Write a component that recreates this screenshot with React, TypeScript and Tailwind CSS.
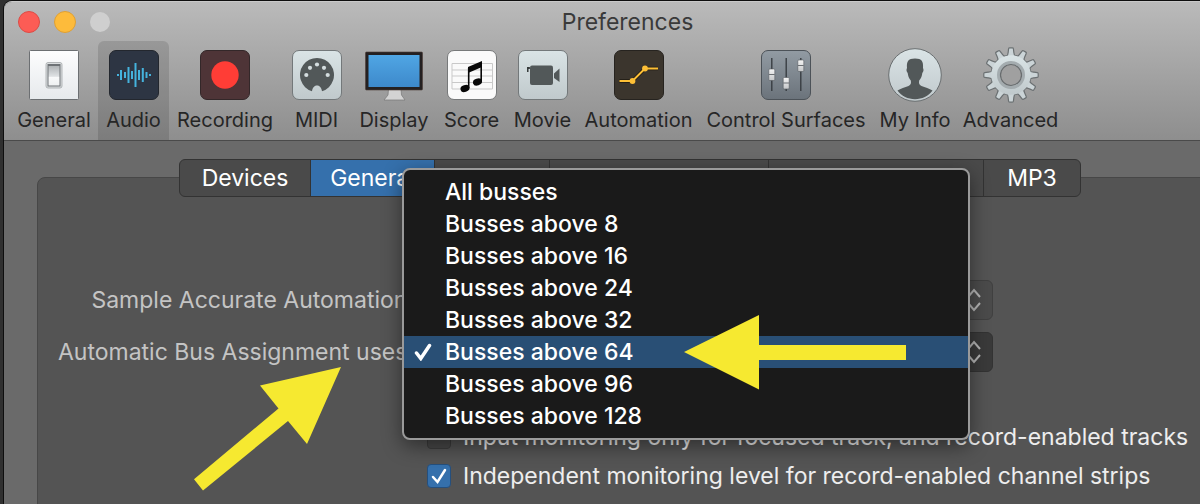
import { type ReactNode } from "react";

const Tile = ({ fill, stroke, children }: { fill: string; stroke: string; children: ReactNode }) => (
  <svg viewBox="0 0 50 50" className="h-[50px] w-[50px]">
    <rect x="0.5" y="0.5" width="49" height="49" rx="6.5" fill={fill} stroke={stroke} />
    {children}
  </svg>
);

const GeneralIcon = () => (
  <svg viewBox="0 0 50 50" className="h-[50px] w-[50px]">
    <rect x="0.5" y="0.5" width="49" height="49" rx="1" fill="url(#plate)" stroke="#6c6f72" />
    <rect x="17" y="12.5" width="16" height="25.5" rx="2" fill="#d9dcde" stroke="#a3a7aa" strokeWidth="0.8" />
    <rect x="19" y="14.5" width="12" height="21.5" fill="url(#rocker)" stroke="#6e7276" />
    <path d="M19 15.500H31" stroke="#6e7276" />
  </svg>
);

const WAVE = [
  [9, 1], [12, 5], [16, 3], [19.5, 8], [23, 4], [26.5, 12], [30, 5], [33.8, 7], [37.5, 3], [41, 1],
];

const AudioIcon = () => (
  <Tile fill="#2d3543" stroke="#23272e">
    {WAVE.map(([x, h]) => (
      <path key={x} d={`M${x} ${25 - h}V${25 + h}`} stroke="#45b3dd" strokeWidth="2" />
    ))}
  </Tile>
);

const RecordingIcon = () => (
  <Tile fill="#4e3437" stroke="#332729">
    <circle cx="25" cy="25" r="13.7" fill="#ff3d36" />
  </Tile>
);

const MidiIcon = () => (
  <Tile fill="url(#silver)" stroke="#73787a">
    <path
      d="M20 41.2A17 17 0 1 1 30 41.2C29.5 38 28 35.5 25 35.5S20.5 38 20 41.2Z"
      fill="#525859"
    />
    {[[14.3, 25], [18, 17.8], [25, 14.5], [32, 17.8], [35.7, 25]].map(([cx, cy]) => (
      <circle key={cx} cx={cx} cy={cy} r="2.1" fill="#d4dddf" />
    ))}
  </Tile>
);

const DisplayIcon = () => (
  <svg viewBox="0 0 58 52" className="h-[52px] w-[58px]">
    <path d="M23.500 40H36L36.500 46 40 51H19L23 46Z" fill="#d3d3d3" stroke="#777" strokeWidth="0.7" />
    <rect x="0.500" y="3" width="57" height="38" rx="1" fill="#242021" stroke="#4d3c38" strokeWidth="0.6" />
    <rect x="3.500" y="6" width="51" height="32" fill="url(#screen)" />
  </svg>
);

const ScoreIcon = () => (
  <Tile fill="#fafafa" stroke="#77797a">
    <path d="M5 13.500H45.500V39H5ZM5 20H45.500M5 26H45.500M5 32.500H45.500" fill="none" stroke="#c9c9c9" />
    <path d="M21 17 35 11V17L21 23Z" fill="#080808" />
    <path d="M21.700 18V38M34.200 12V32" stroke="#080808" strokeWidth="1.600" />
    <ellipse cx="18" cy="38.500" rx="4.600" ry="3.400" transform="rotate(-18 18 38.500)" fill="#080808" />
    <ellipse cx="30.500" cy="32" rx="4.600" ry="3.400" transform="rotate(-18 30.500 32)" fill="#080808" />
  </Tile>
);

const MovieIcon = () => (
  <Tile fill="url(#silver)" stroke="#73787a">
    <rect x="12" y="15.500" width="23" height="19.500" rx="2" fill="#525859" />
    <path d="M36 23.500 41.500 18.500V32L36 28Z" fill="#525859" />
    <path d="M9.800 17V22M9.800 18H12" stroke="#1f2222" strokeWidth="1.300" fill="none" />
  </Tile>
);

const AutomationIcon = () => (
  <Tile fill="#3b352d" stroke="#26231f">
    <path d="M5.500 31H18.500L31 18.500H44" fill="none" stroke="#1f1a12" strokeWidth="3.600" />
    <path d="M5.500 31H18.500L31 18.500H44" fill="none" stroke="#fdbf36" strokeWidth="2" />
    <circle cx="18.500" cy="31" r="2.900" fill="#fdbf36" />
    <circle cx="31" cy="18.500" r="2.900" fill="#fdbf36" />
  </Tile>
);

const ControlSurfacesIcon = () => (
  <Tile fill="url(#steel)" stroke="#4c5258">
    {[[10.8, 19], [25.2, 27.5], [39.8, 10]].map(([x, y]) => (
      <g key={x}>
        <path d={`M${x} 8V41`} stroke="#33383d" strokeWidth="1.300" />
        <rect x={x - 3} y={y} width="6" height="11.500" rx="1" fill="url(#knob)" stroke="#555a5f" strokeWidth="0.600" />
        <path d={`M${x - 3} ${y + 5.5}h6`} stroke="#6b6f73" />
      </g>
    ))}
  </Tile>
);

const MyInfoIcon = () => (
  <svg viewBox="0 0 54 54" className="h-[54px] w-[54px]">
    <circle cx="27" cy="27" r="26.300" fill="url(#silver)" stroke="#6a6f71" />
    <path
      d="M9.500 42.500C12.500 40.500 17 39.500 20.500 38 23 37 23.300 35 22.800 32.500 20.800 30.500 20 27.500 19.700 25 18.300 23.500 18.200 21.500 19 20 18.500 13.500 20 10.500 27 10.500S35.500 13.500 35 20C35.800 21.500 35.700 23.500 34.300 25 34 27.500 33.200 30.500 31.200 32.500 30.700 35 31 37 33.500 38 37 39.500 41.500 40.500 44.500 42.500 40.500 48 34 51.200 27 51.200S13.500 48 9.500 42.500Z"
      fill="#525859"
    />
  </svg>
);

const TEETH = Array.from({ length: 12 }, (_, i) => i * 30);

const AdvancedIcon = () => (
  <svg viewBox="0 0 56 56" className="h-14 w-14">
    <g stroke="#6b7072" strokeWidth="1.200" fill="#cbd4d7">
      <circle cx="28" cy="28" r="20" />
      {TEETH.map((a) => (
        <path
          key={a}
          d="M23.500 9.500C25 8.500 25 7 25.200 5L25.600 1.700Q25.700 0.800 26.600 0.800H29.400Q30.300 0.800 30.400 1.700L30.800 5C31 7 31 8.500 32.500 9.500"
          transform={`rotate(${a} 28 28)`}
        />
      ))}
    </g>
    <circle cx="28" cy="28" r="19.800" fill="url(#silver)" />
    <circle cx="28" cy="28" r="12.500" fill="none" stroke="#a4acaf" strokeWidth="3" />
    <circle cx="28" cy="28" r="10.500" fill="#a0a0a0" stroke="#686c6e" strokeWidth="1.200" />
  </svg>
);

const TOOLS = [
  { label: "General", icon: <GeneralIcon />, width: "w-[88px]" },
  { label: "Audio", icon: <AudioIcon />, width: "w-[71px]", active: true },
  { label: "Recording", icon: <RecordingIcon />, width: "w-[112px]" },
  { label: "MIDI", icon: <MidiIcon />, width: "w-[71px]" },
  { label: "Display", icon: <DisplayIcon />, width: "w-[84px]" },
  { label: "Score", icon: <ScoreIcon />, width: "w-[71px]" },
  { label: "Movie", icon: <MovieIcon />, width: "w-[71px]" },
  { label: "Automation", icon: <AutomationIcon />, width: "w-[121px]" },
  { label: "Control Surfaces", icon: <ControlSurfacesIcon />, width: "w-[174px]" },
  { label: "My Info", icon: <MyInfoIcon />, width: "w-[84px]" },
  { label: "Advanced", icon: <AdvancedIcon />, width: "w-[107px]" },
];

const BUSSES = [
  "All busses",
  "Busses above 8",
  "Busses above 16",
  "Busses above 24",
  "Busses above 32",
  "Busses above 64",
  "Busses above 96",
  "Busses above 128",
];

const SELECTED = "Busses above 64";

// gradients shared by the toolbar icons
const IconDefs = () => (
  <svg className="absolute h-0 w-0" aria-hidden="true">
    <defs>
      <linearGradient id="plate" x2="0" y2="1">
        <stop stopColor="#fdfdfe" />
        <stop offset="1" stopColor="#e6e9ec" />
      </linearGradient>
      <linearGradient id="rocker" x2="0" y2="1">
        <stop stopColor="#a9adb0" />
        <stop offset="0.55" stopColor="#dfe2e4" />
        <stop offset="0.6" stopColor="#f8f9fa" />
        <stop offset="1" stopColor="#eef0f1" />
      </linearGradient>
      <linearGradient id="silver" x2="0" y2="1">
        <stop stopColor="#dae4e6" />
        <stop offset="1" stopColor="#c0c9cc" />
      </linearGradient>
      <linearGradient id="steel" x2="0" y2="1">
        <stop stopColor="#929ba3" />
        <stop offset="1" stopColor="#6b737b" />
      </linearGradient>
      <linearGradient id="screen" x2="0" y2="1">
        <stop stopColor="#50a6e4" />
        <stop offset="1" stopColor="#3d89cb" />
      </linearGradient>
      <linearGradient id="knob" x2="0" y2="1">
        <stop stopColor="#f5f5f5" />
        <stop offset="1" stopColor="#c4c6c8" />
      </linearGradient>
    </defs>
  </svg>
);

const Toolbar = () => (
  <nav className="flex pl-1.5">
    {TOOLS.map((t) => (
      <button
        key={t.label}
        className={`flex h-[99px] shrink-0 flex-col items-center rounded-t-md text-[20px] leading-[22px] whitespace-nowrap text-[#262626] ${t.width} ${
          t.active ? "bg-black/12" : ""
        }`}
      >
        <span className="flex h-[68px] items-center">{t.icon}</span>
        {t.label}
      </button>
    ))}
  </nav>
);

const Tab = ({ label, className }: { label?: string; className: string }) => (
  <button
    role="tab"
    className={`h-9 border-r border-[#333] text-[23px] leading-9 text-white last:border-r-0 ${className}`}
  >
    {label}
  </button>
);

const Stepper = () => (
  <svg
    viewBox="0 0 14 24"
    className="pointer-events-none absolute top-2 right-3 h-6 w-3.5"
    fill="none"
    stroke="#b4b4b4"
    strokeWidth="2"
  >
    <path d="M1 9 7 2 13 9M1 15 7 22 13 15" />
  </svg>
);

const BusMenu = () => (
  <ul
    role="listbox"
    className="absolute -top-[164px] -left-3 z-10 w-[568px] rounded-lg border-2 border-[#9a9a9a] bg-[#1a1a1a] py-1.5 text-[23px] leading-8 font-medium text-white shadow-[0_6px_20px_rgba(0,0,0,0.45)]"
  >
    {BUSSES.map((b) => (
      <li
        key={b}
        role="option"
        aria-selected={b === SELECTED}
        className={`flex h-8 items-center ${b === SELECTED ? "bg-[#294f75]" : ""}`}
      >
        <span className="flex w-[41px] shrink-0 pl-2.5">
          {b === SELECTED && (
            <svg viewBox="0 0 18 18" className="size-[18px]" fill="none" stroke="#fff" strokeWidth="3.500">
              <path d="M2.500 10 6.800 15.500 15.500 2.500" strokeLinecap="round" />
            </svg>
          )}
        </span>
        {b}
      </li>
    ))}
  </ul>
);

const Arrows = () => (
  <svg
    width="1200"
    height="504"
    className="pointer-events-none absolute top-0 left-0 z-20"
    fill="#f6e930"
    aria-hidden="true"
  >
    <path d="M341 367 307 444 288 421 203 490.500 194 479.300 278.500 408.500 260 385.500Z" />
    <path d="M684 352 759 315V345H906V360H759V389.500Z" />
  </svg>
);

const Check = ({ id, label, checked }: { id: string; label: string; checked?: boolean }) => (
  <div className="flex items-center gap-3">
    <span className="relative flex">
      <input
        id={id}
        type="checkbox"
        defaultChecked={checked}
        className="size-6 appearance-none rounded border border-[#3c3c3c] bg-[#484848] checked:border-[#254f7d] checked:bg-[#3570ac]"
      />
      {checked && (
        <svg viewBox="0 0 24 24" className="pointer-events-none absolute inset-0" fill="none" stroke="#fff" strokeWidth="2.500">
          <path d="M6 13 10.500 18 18 6" strokeLinecap="round" />
        </svg>
      )}
    </span>
    <label htmlFor={id} className="whitespace-nowrap text-white/90">
      {label}
    </label>
  </div>
);

export default function App() {
  return (
    <div className="relative min-h-screen overflow-hidden bg-[#303030] pt-px font-['Inter',sans-serif]">
      <IconDefs />
      <div className="-mr-[51px] ml-1 rounded-tl-lg border-t border-[#c9c9c9] bg-[#6a6a6a] shadow-[0_0_0_1px_#0e0e0e]">
        <header className="rounded-tl-lg border-b border-[#4a4a4a] bg-linear-to-b from-[#bababa] to-[#8e8e8e]">
          <div className="relative flex h-[39px] items-center gap-3.5 pl-3.5">
            <button aria-label="Close" className="size-[22px] rounded-full border border-[#dd4b45] bg-[#fc5c55]" />
            <button aria-label="Minimize" className="size-[22px] rounded-full border border-[#e0a033] bg-[#fdbb3b]" />
            <button aria-label="Zoom" className="size-[20px] rounded-full bg-[#cfcfcf]" />
            <h1 className="pointer-events-none absolute inset-x-0 pt-0.5 text-center text-[23px] text-[#3a3a3a]">
              Preferences
            </h1>
          </div>
          <Toolbar />
        </header>

        <main className="pt-9 pr-7 pl-[33px] text-[23px] leading-7">
          <section className="min-h-[328px] rounded-t-lg border border-[#474747] bg-[#545454]">
            <div
              role="tablist"
              className="mx-auto -mt-[19px] flex w-fit overflow-hidden rounded-md border border-[#333] bg-[#4a4a4a]"
            >
              <Tab label="Devices" className="w-[131px]" />
              <Tab label="General" className="w-[124px] bg-[#3570ac]" />
              <Tab className="w-[115px]" />
              <Tab className="w-[219px]" />
              <Tab className="w-[215px]" />
              <Tab label="MP3" className="w-[96px]" />
            </div>

            <div className="mt-[83px] grid grid-cols-[376px_579px] items-center gap-y-3 text-[#c4c4c4]">
              <label htmlFor="saa" className="justify-self-end whitespace-nowrap">
                Sample Accurate Automation:
              </label>
              <div className="relative">
                <select id="saa" className="block h-10 w-full appearance-none rounded-md border border-[#404040] bg-[#4b4b4b]" />
                <Stepper />
              </div>
              <label htmlFor="bus" className="justify-self-end whitespace-nowrap">
                Automatic Bus Assignment uses:
              </label>
              <div className="relative">
                <select
                  id="bus"
                  defaultValue={SELECTED}
                  className="block h-10 w-full appearance-none rounded-md border border-[#333] bg-[#3a3a3a] px-3"
                >
                  {BUSSES.map((b) => (
                    <option key={b}>{b}</option>
                  ))}
                </select>
                <Stepper />
                <BusMenu />
              </div>
            </div>

            <div className="mt-[51px] ml-[389px] flex flex-col gap-[11px]">
              <Check id="input-mon" label="Input monitoring only for focused track, and record-enabled tracks" />
              <Check id="indep-mon" label="Independent monitoring level for record-enabled channel strips" checked />
            </div>
          </section>
        </main>
      </div>
      <Arrows />
    </div>
  );
}
